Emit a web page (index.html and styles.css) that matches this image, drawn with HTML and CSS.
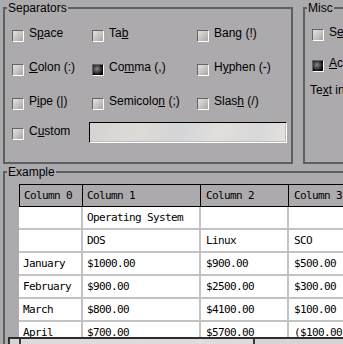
FILE: index.html
```html
<!DOCTYPE html>
<html lang="en">
<head>
    <meta charset="UTF-8">
    <meta name="viewport" content="width=device-width, initial-scale=1.0">
    <title>Import Options</title>
    <link rel="stylesheet" href="styles.css">
</head>
<body>
    <div class="dialog">
        <div class="top">
            <fieldset class="group separators">
                <legend>Separators</legend>
                <div class="options">
                    <label class="check"><span class="box"></span><span>S<u>p</u>ace</span></label>
                    <label class="check"><span class="box"></span><span>Ta<u>b</u></span></label>
                    <label class="check"><span class="box"></span><span>Ban<u>g</u> (!)</span></label>
                    <label class="check"><span class="box"></span><span><u>C</u>olon (:)</span></label>
                    <label class="check"><span class="box on"></span><span>Co<u>m</u>ma (,)</span></label>
                    <label class="check"><span class="box"></span><span>H<u>y</u>phen (-)</span></label>
                    <label class="check"><span class="box"></span><span>P<u>i</u>pe (|)</span></label>
                    <label class="check"><span class="box"></span><span>Semicolo<u>n</u> (;)</span></label>
                    <label class="check"><span class="box"></span><span>Slas<u>h</u> (/)</span></label>
                </div>
                <div class="custom">
                    <label class="check"><span class="box"></span><span>C<u>u</u>stom</span></label>
                    <span class="field"></span>
                </div>
            </fieldset>
            <fieldset class="group misc">
                <legend>Misc</legend>
                <div class="misc-body">
                    <label class="check"><span class="box"></span><span>S<u>e</u>t as default</span></label>
                    <label class="check"><span class="box on"></span><span><u>A</u>ccept quotes</span></label>
                    <p class="note">Te<u>x</u>t indicator:</p>
                </div>
            </fieldset>
        </div>

        <fieldset class="group example">
            <legend>Example</legend>
            <div class="example-body">
                <div class="view">
                    <table class="grid">
                        <colgroup>
                            <col class="c0"><col class="c1"><col class="c2"><col class="c3">
                        </colgroup>
                        <thead>
                            <tr><th>Column 0</th><th>Column 1</th><th>Column 2</th><th>Column 3</th></tr>
                        </thead>
                        <tbody>
                            <tr><td></td><td>Operating System</td><td></td><td></td></tr>
                            <tr><td></td><td>DOS</td><td>Linux</td><td>SCO</td></tr>
                            <tr><td>January</td><td>$1000.00</td><td>$900.00</td><td>$500.00</td></tr>
                            <tr><td>February</td><td>$900.00</td><td>$2500.00</td><td>$300.00</td></tr>
                            <tr><td>March</td><td>$800.00</td><td>$4100.00</td><td>$100.00</td></tr>
                            <tr><td>April</td><td>$700.00</td><td>$5700.00</td><td>($100.00)</td></tr>
                        </tbody>
                    </table>
                </div>
                <div class="scrollbar"><span class="slider"></span></div>
            </div>
        </fieldset>
    </div>
</body>
</html>
```

FILE: styles.css
```css
/* CSV import options */
* {
    box-sizing: border-box;
}

body {
    margin: 0;
    overflow: hidden;
    background: #adaaad;
    color: #000;
    font-family: "Liberation Sans", Arial, sans-serif;
    font-size: 12px;
    line-height: 14px;
}

.dialog {
    width: 460px;
    padding: 1px 0 0 3px;
}

.top {
    display: flex;
    gap: 10px;
}

.group {
    margin: 0;
    padding: 0;
    min-width: 0;
    border: 2px solid #596161;
}

.group legend {
    margin-left: 2px;
    padding: 0 1px;
    line-height: 14px;
}

/* Separators */
.separators {
    width: 290px;
    padding-bottom: 16px;
}

.options {
    display: grid;
    grid-template-columns: 80px 105px 1fr;
    grid-template-rows: 34px 34px 33px;
    align-items: center;
    margin-top: 2px;
    padding-left: 7px;
}

/* box sits a little lower than the text line */
.check {
    display: flex;
    align-items: flex-start;
    gap: 5px;
    white-space: nowrap;
}

.box {
    flex: none;
    width: 12px;
    height: 12px;
    margin-top: 4px;
    border: 1px solid;
    border-color: #646464 #fff #fff #646464;
    background: linear-gradient(135deg, #e4e2de 0%, #c8c6c2 50%, #a6a5a1 100%);
}

.box.on {
    background: radial-gradient(circle at 40% 40%, #8a8a8a 0%, #3a3a3a 45%, #000 75%);
}

.custom {
    display: flex;
    align-items: center;
    height: 28px;
    padding-left: 7px;
}

.custom .check {
    width: 77px;
}

.field {
    width: 198px;
    height: 21px;
    border: 1px solid;
    border-color: #000 #fff #fff #000;
    box-shadow: inset -1px -1px 0 #bdbdbd;
    background: linear-gradient(110deg, #d5d3d3 0%, #dedad6 25%, #d3d5d8 45%, #e2deda 65%, #d8d8da 85%, #e6e2de 100%);
}

/* Misc */
.misc {
    width: 150px;
}

.misc-body {
    padding: 10px 0 0 7px;
}

.misc .check + .check {
    margin-top: 15px;
}

.note {
    margin: 11px 0 0 -2px;
    white-space: nowrap;
}

/* Example */
.example {
    margin-top: 1px;
}

.example-body {
    padding: 5px 0 0 14px;
}

.view {
    height: 153px;
    overflow: hidden;
}

.grid {
    table-layout: fixed;
    width: 380px;
    border-spacing: 0;
    background: #fff;
    font-family: "DejaVu Sans Mono", monospace;
    font-size: 11px;
    letter-spacing: -0.62px;
}

.grid .c0 { width: 64px; }
.grid .c1 { width: 118px; }
.grid .c2 { width: 88px; }
.grid .c3 { width: 110px; }

.grid th,
.grid td {
    padding: 0 0 0 4px;
    text-align: left;
    font-weight: normal;
    white-space: nowrap;
    overflow: hidden;
}

.grid th {
    height: 23px;
    background: #adaaad;
    border-top: 1px solid #000;
    border-right: 1px solid #000;
    border-bottom: 1px solid #000;
}

.grid th:first-child {
    border-left: 1px solid #000;
}

.grid td {
    height: 23px;
    border-right: 2px solid #c3c3c3;
    border-bottom: 2px solid #c3c3c3;
}

.grid td:nth-child(3),
.grid td:nth-child(4),
.grid th:nth-child(3),
.grid th:nth-child(4) {
    padding-left: 5px;
}

.scrollbar {
    display: block;
    height: 12px;
    margin-left: -11px;
    border-top: 2px solid #2e2e2e;
    border-left: 2px solid #2e2e2e;
    background: #d6d4d4;
}

.slider {
    display: block;
    width: 236px;
    height: 100%;
    margin-left: 9px;
    border-left: 2px solid #3a3a3a;
    border-right: 2px solid #3a3a3a;
    background: #dddbdb;
}
```
